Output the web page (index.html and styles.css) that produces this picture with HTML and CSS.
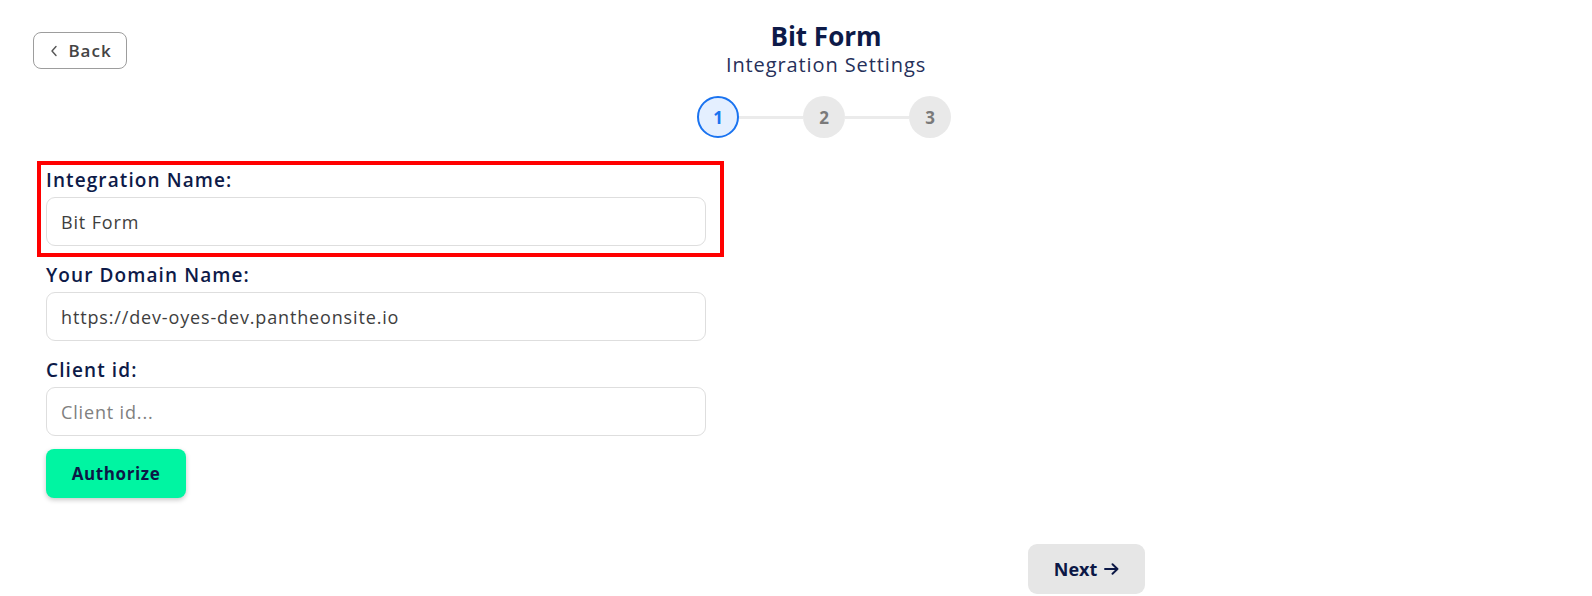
FILE: index.html
```html
<!DOCTYPE html>
<html lang="en">
<head>
<meta charset="utf-8">
<title>Bit Form - Integration Settings</title>
<link rel="stylesheet" href="styles.css">
</head>
<body>
<div class="page">
  <header class="top">
    <button class="back" type="button">
      <svg class="chev" width="8" height="12" viewBox="0 0 8 12" aria-hidden="true"><path d="M6 1.5 L2 6 L6 10.5" fill="none" stroke="#555" stroke-width="1.4" stroke-linecap="round" stroke-linejoin="round"/></svg>
      <span>Back</span>
    </button>
    <div class="heading">
      <h1 class="title">Bit Form</h1>
      <div class="subtitle">Integration Settings</div>
      <div class="steps">
        <div class="step active">1</div>
        <div class="line"></div>
        <div class="step">2</div>
        <div class="line"></div>
        <div class="step">3</div>
      </div>
    </div>
  </header>

  <form class="form">
    <div class="highlight"></div>
    <div class="field">
      <label class="label">Integration Name:</label>
      <input class="input" type="text" value="Bit Form">
    </div>
    <div class="field">
      <label class="label">Your Domain Name:</label>
      <input class="input" type="text" value="https://dev-oyes-dev.pantheonsite.io">
    </div>
    <div class="field">
      <label class="label">Client id:</label>
      <input class="input" type="text" placeholder="Client id...">
    </div>
    <button class="authorize" type="button">Authorize</button>
  </form>

  <div class="actions">
    <button class="next" type="button">
      <span>Next</span>
      <svg class="arrow" width="15" height="12" viewBox="0 0 15 12" aria-hidden="true"><path d="M1 6 H13.5 M8.5 1.2 L13.5 6 L8.5 10.8" fill="none" stroke="#0c1846" stroke-width="1.9" stroke-linecap="round" stroke-linejoin="round"/></svg>
    </button>
  </div>
</div>
</body>
</html>
```

FILE: styles.css
```css
* { box-sizing: border-box; }

html, body {
  margin: 0;
  padding: 0;
  background: #ffffff;
  overflow: hidden;
}

body {
  font-family: "Open Sans", "Liberation Sans", sans-serif;
  color: #0e1a45;
}

.page {
  width: 1592px;
  height: 596px;
}

.top {
  display: flex;
  align-items: flex-start;
  padding: 20px 67px 0 33px;
}

.back {
  margin-top: 12px;
  width: 94px;
  height: 37px;
  border: 1px solid #9d9d9d;
  border-radius: 8px;
  background: #fff;
  display: flex;
  align-items: center;
  justify-content: center;
  gap: 10px;
  padding: 0 0 0 2px;
  font-family: "Open Sans", sans-serif;
  font-weight: 600;
  font-size: 17px;
  letter-spacing: 1px;
  color: #444;
  cursor: pointer;
}

.chev { display: block; }

.heading {
  flex: 1;
  display: flex;
  flex-direction: column;
  align-items: center;
}

.title {
  margin: 0;
  font-size: 26px;
  line-height: 32px;
  font-weight: 700;
  color: #0d1a48;
}

.subtitle {
  font-size: 20px;
  line-height: 26px;
  font-weight: 400;
  color: #26305a;
  letter-spacing: 0.9px;
}

.steps {
  margin-top: 18px;
  display: flex;
  align-items: center;
  margin-right: 4px;
}

.step {
  width: 42px;
  height: 42px;
  border-radius: 50%;
  background: #e9e9e9;
  color: #7a7a7a;
  font-weight: 700;
  font-size: 17px;
  display: flex;
  align-items: center;
  justify-content: center;
}

.step.active {
  background: #e4efff;
  border: 2px solid #1a73f0;
  color: #1a73f0;
}

.line {
  width: 64px;
  height: 3px;
  background: #ebebeb;
}

.form {
  position: relative;
  margin: 30px 0 0 46px;
  width: 660px;
  display: flex;
  flex-direction: column;
  align-items: flex-start;
}

.highlight {
  position: absolute;
  left: -9px;
  top: -7px;
  width: 687px;
  height: 96px;
  border: 4px solid #ff0000;
  pointer-events: none;
}

.field {
  width: 660px;
  display: flex;
  flex-direction: column;
  margin-bottom: 17px;
}

.field:last-of-type { margin-bottom: 13px; }

.label {
  font-size: 19px;
  line-height: 24px;
  font-weight: 600;
  letter-spacing: 1.1px;
  color: #0d1a48;
  margin-bottom: 5px;
}

.input {
  width: 660px;
  height: 49px;
  border: 1px solid #dedede;
  border-radius: 9px;
  padding: 0 14px;
  font-family: "Open Sans", sans-serif;
  font-size: 18px;
  letter-spacing: 0.85px;
  color: #3e3e3e;
  background: #fff;
  outline: none;
}

.input::placeholder { color: #808080; }

.authorize {
  width: 140px;
  height: 49px;
  border: none;
  border-radius: 8px;
  background: #00f5a2;
  box-shadow: 0 2px 5px rgba(0, 0, 0, 0.22);
  font-family: "Open Sans", sans-serif;
  font-size: 17px;
  font-weight: 700;
  letter-spacing: 0.6px;
  color: #0c1846;
  cursor: pointer;
}

.actions {
  margin-top: 46px;
  padding-left: 1028px;
  display: flex;
}

.next {
  width: 117px;
  height: 50px;
  border: none;
  border-radius: 9px;
  background: #e6e6e6;
  font-family: "Open Sans", sans-serif;
  font-size: 18px;
  font-weight: 700;
  color: #0c1846;
  display: flex;
  align-items: center;
  justify-content: center;
  gap: 7px;
  cursor: pointer;
}

.arrow { display: block; }
```
